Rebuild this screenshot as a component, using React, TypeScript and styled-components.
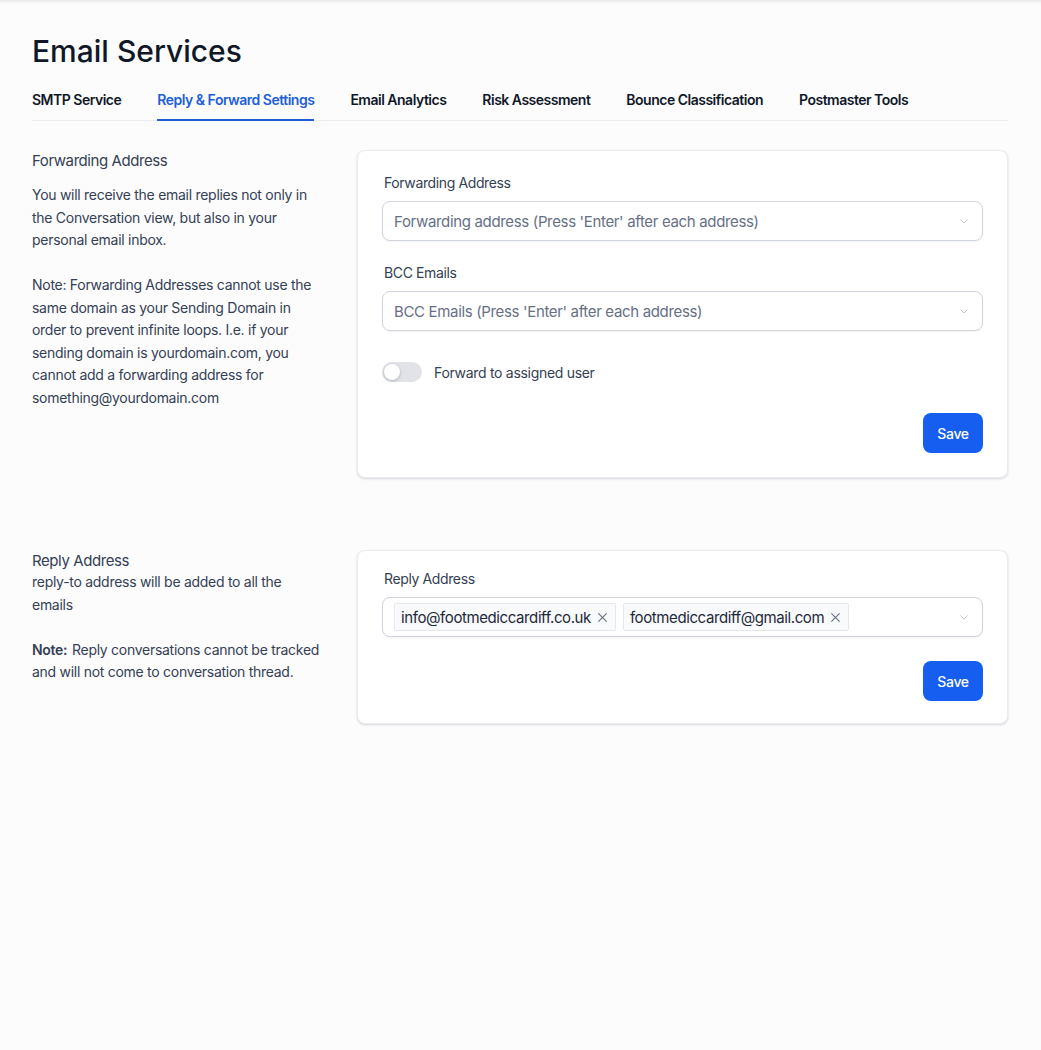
import React from "react";
import styled, { createGlobalStyle } from "styled-components";

const GlobalStyle = createGlobalStyle`
  html, body {
    margin: 0;
    padding: 0;
    background: #fcfcfd;
    font-family: Inter, "Noto Sans", sans-serif;
    color: #101828;
    letter-spacing: -0.3px;
  }
  * {
    box-sizing: border-box;
  }
`;

const Page = styled.div`
  min-height: 1050px;
  padding: 32px 33px 40px 32px;
  box-shadow: inset 0 4px 4px -3px rgba(16, 24, 40, 0.12);
`;

const Title = styled.h1`
  margin: 0;
  font-size: 30px;
  line-height: 38px;
  font-weight: 500;
  letter-spacing: 0;
  color: #101828;
`;

const Tabs = styled.nav`
  display: flex;
  gap: 36px;
  margin-top: 17px;
  border-bottom: 1px solid #eaecf0;
`;

const Tab = styled.div<{ $active?: boolean }>`
  padding: 3px 0 9px;
  font-size: 14px;
  line-height: 20px;
  font-weight: 600;
  letter-spacing: -0.5px;
  color: ${(p) => (p.$active ? "#1d5fd6" : "#101828")};
  border-bottom: 2px solid ${(p) => (p.$active ? "#1d5fd6" : "transparent")};
  margin-bottom: -1px;
`;

const Section = styled.section<{ $top: number }>`
  display: grid;
  grid-template-columns: 288px 1fr;
  gap: 37px;
  margin-top: ${(p) => p.$top}px;
`;

const Side = styled.div`
  font-size: 14px;
  line-height: 22.5px;
  color: #344054;
  letter-spacing: -0.28px;
`;

const SideTitle = styled.div<{ $gap: number }>`
  font-size: 15px;
  line-height: 20px;
  letter-spacing: -0.42px;
  color: #344054;
  margin-top: 1px;
  margin-bottom: ${(p) => p.$gap}px;
`;

const SideText = styled.p`
  margin: 0 0 22.5px;
  b {
    font-weight: 600;
    margin-right: 1px;
  }
`;

const Card = styled.div<{ $pt: number; $pb: number }>`
  background: #fff;
  border: 1px solid #eaecf0;
  border-radius: 8px;
  box-shadow: 0 1px 3px rgba(16, 24, 40, 0.1), 0 1px 2px rgba(16, 24, 40, 0.06);
  padding: ${(p) => p.$pt}px 24px ${(p) => p.$pb}px 24px;
  display: flex;
  flex-direction: column;
`;

const Label = styled.div`
  font-size: 14px;
  line-height: 20px;
  letter-spacing: -0.38px;
  color: #344054;
  padding-left: 2px;
  margin-bottom: 8px;
`;

const Field = styled.div`
  display: flex;
  align-items: center;
  gap: 8px;
  height: 40px;
  padding: 0 12px 0 11px;
  border: 1px solid #d0d5dd;
  border-radius: 8px;
  box-shadow: 0 1px 2px rgba(16, 24, 40, 0.05);
  background: #fff;
  margin-bottom: 22px;
`;

const Placeholder = styled.span`
  flex: 1;
  font-size: 15px;
  letter-spacing: -0.34px;
  color: #667085;
`;

const Tags = styled.div`
  flex: 1;
  display: flex;
  gap: 7px;
`;

const Tag = styled.span`
  display: inline-flex;
  align-items: center;
  gap: 6px;
  height: 28px;
  padding: 0 7px 0 6px;
  background: #f9fafb;
  border: 1px solid #e4e7ec;
  border-radius: 2px;
  font-size: 15px;
  letter-spacing: -0.4px;
  color: #1d2939;
`;

const ToggleRow = styled.div`
  display: flex;
  align-items: center;
  gap: 12px;
  margin-top: 9px;
  font-size: 14px;
  letter-spacing: -0.3px;
  color: #344054;
`;

const Switch = styled.span`
  position: relative;
  width: 40px;
  height: 20px;
  border-radius: 10px;
  background: #e1e3e8;

  &::after {
    content: "";
    position: absolute;
    top: 2px;
    left: 2px;
    width: 16px;
    height: 16px;
    border-radius: 50%;
    background: #fff;
    box-shadow: 0 1px 3px rgba(16, 24, 40, 0.25);
  }
`;

const Footer = styled.div<{ $top: number }>`
  display: flex;
  justify-content: flex-end;
  margin-top: ${(p) => p.$top}px;
`;

const SaveButton = styled.button`
  width: 60px;
  height: 40px;
  border: none;
  border-radius: 8px;
  background: #155eef;
  color: #fff;
  font-family: inherit;
  font-size: 14px;
  font-weight: 500;
  letter-spacing: -0.3px;
`;

const Chevron = () => (
  <svg width="12" height="12" viewBox="0 0 12 12" fill="none">
    <path d="M2.5 4.5 6 8l3.5-3.5" stroke="#c0c5cf" strokeWidth="1" />
  </svg>
);

const Close = () => (
  <svg width="11" height="11" viewBox="0 0 12 12" fill="none">
    <path d="M1.5 1.5l9 9M10.5 1.5l-9 9" stroke="#667085" strokeWidth="1.2" />
  </svg>
);

const tabs = [
  "SMTP Service",
  "Reply & Forward Settings",
  "Email Analytics",
  "Risk Assessment",
  "Bounce Classification",
  "Postmaster Tools",
];

export default function App() {
  return (
    <>
      <GlobalStyle />
      <Page>
        <Title>Email Services</Title>
        <Tabs>
          {tabs.map((t) => (
            <Tab key={t} $active={t === "Reply & Forward Settings"}>
              {t}
            </Tab>
          ))}
        </Tabs>

        <Section $top={29}>
          <Side>
            <SideTitle $gap={13}>Forwarding Address</SideTitle>
            <SideText>
              You will receive the email replies not only in the Conversation
              view, but also in your personal email inbox.
            </SideText>
            <SideText>
              Note: Forwarding Addresses cannot use the same domain as your
              Sending Domain in order to prevent infinite loops. I.e. if your
              sending domain is yourdomain.com, you cannot add a forwarding
              address for something@yourdomain.com
            </SideText>
          </Side>
          <Card $pt={22} $pb={24}>
            <Label>Forwarding Address</Label>
            <Field>
              <Placeholder>
                Forwarding address (Press 'Enter' after each address)
              </Placeholder>
              <Chevron />
            </Field>
            <Label>BCC Emails</Label>
            <Field>
              <Placeholder>BCC Emails (Press 'Enter' after each address)</Placeholder>
              <Chevron />
            </Field>
            <ToggleRow>
              <Switch />
              Forward to assigned user
            </ToggleRow>
            <Footer $top={31}>
              <SaveButton>Save</SaveButton>
            </Footer>
          </Card>
        </Section>

        <Section $top={72}>
          <Side>
            <SideTitle $gap={0}>Reply Address</SideTitle>
            <SideText>reply-to address will be added to all the emails</SideText>
            <SideText>
              <b>Note:</b> Reply conversations cannot be tracked and will not
              come to conversation thread.
            </SideText>
          </Side>
          <Card $pt={18} $pb={22}>
            <Label>Reply Address</Label>
            <Field>
              <Tags>
                <Tag>
                  info@footmediccardiff.co.uk
                  <Close />
                </Tag>
                <Tag>
                  footmediccardiff@gmail.com
                  <Close />
                </Tag>
              </Tags>
              <Chevron />
            </Field>
            <Footer $top={2}>
              <SaveButton>Save</SaveButton>
            </Footer>
          </Card>
        </Section>
      </Page>
    </>
  );
}
